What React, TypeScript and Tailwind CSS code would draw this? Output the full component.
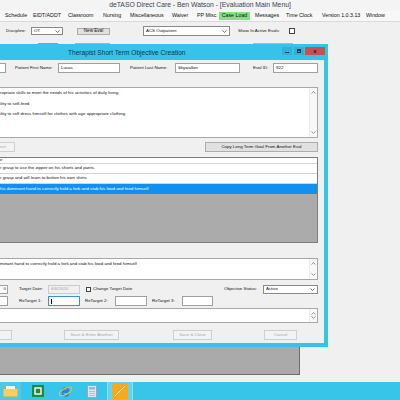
import React from 'react'

function Chevron({ up = false }: { up?: boolean }) {
  return (
    <svg width="5" height="3" viewBox="0 0 5 3" className="block">
      <path
        d={up ? 'M0.5 2.5 L2.5 0.6 L4.5 2.5' : 'M0.5 0.5 L2.5 2.4 L4.5 0.5'}
        fill="none"
        stroke="#6a6a6a"
        strokeWidth="0.7"
      />
    </svg>
  )
}

function ScrollBar() {
  return (
    <div className="flex h-full w-[8px] shrink-0 flex-col items-center justify-between border-l border-[#ececec] bg-[#f8f8f8] py-[3px]">
      <Chevron up />
      <Chevron />
    </div>
  )
}

function Select({ value, className }: { value: string; className: string }) {
  return (
    <div
      className={`flex items-center justify-between border border-[#8a8a8a] bg-white pl-[2px] pr-[2px] text-[4.4px] ${className}`}
    >
      <span>{value}</span>
      <svg width="5" height="3" viewBox="0 0 5 3" className="block">
        <path d="M0.5 0.5 L2.5 2.4 L4.5 0.5" fill="none" stroke="#333" strokeWidth="0.7" />
      </svg>
    </div>
  )
}

function TaskbarIcons() {
  return (
    <div className="flex h-full items-center">
      <div className="flex h-full w-[21px] items-center justify-center bg-[#48cbec]">
        <svg width="15" height="12" viewBox="0 0 15 12">
          <path d="M0.5 1.5 h5 l1.5 1.5 h7.5 v8.5 h-14z" fill="#dba533" />
          <rect x="3" y="1" width="9" height="4" fill="#eef6fb" />
          <rect x="0.5" y="4" width="14" height="7.5" fill="#f6cf63" />
        </svg>
      </div>
      <div className="ml-[11px]">
        <svg width="12" height="12" viewBox="0 0 12 12">
          <rect x="0" y="0" width="12" height="12" fill="#1d8b3d" />
          <rect x="3" y="3" width="6" height="6" fill="none" stroke="#fff" strokeWidth="1.4" />
        </svg>
      </div>
      <div className="ml-[14px]">
        <svg width="15" height="15" viewBox="0 0 15 15">
          <path
            d="M11 8 H4.5 A3 3 0 0 0 10.5 9.5 M4.5 6.6 A3 3 0 0 1 10.4 6.6 Z"
            fill="none"
            stroke="#2a86dc"
            strokeWidth="1.8"
          />
          <ellipse
            cx="7.5"
            cy="7.5"
            rx="7"
            ry="3"
            transform="rotate(-30 7.5 7.5)"
            fill="none"
            stroke="#f2c02e"
            strokeWidth="1.1"
          />
        </svg>
      </div>
      <div className="ml-[14px]">
        <svg width="10" height="13" viewBox="0 0 10 13">
          <rect x="0.5" y="0.5" width="9" height="12" fill="#dfe6ee" stroke="#97a9bd" />
          <rect x="2" y="2" width="6" height="2.5" fill="#8fb6dc" />
          <path d="M2 6.5 h6 M2 8.5 h6 M2 10.5 h6" stroke="#a7b5c4" strokeWidth="0.8" />
        </svg>
      </div>
      <div className="ml-[10px] flex h-full w-[26px] items-center justify-center border-x border-[#8fe0f4] bg-[#62d4f1]">
        <svg width="16" height="16" viewBox="0 0 16 16">
          <rect x="0" y="0" width="16" height="16" fill="#f6a820" />
          <path d="M3 13 L13 3" stroke="#fde7b8" strokeWidth="1" />
        </svg>
      </div>
    </div>
  )
}

export default function App() {
  return (
    <div className="relative flex h-[400px] w-[400px] flex-col overflow-hidden bg-[#f0f0f0] font-['Liberation_Sans',Arial,sans-serif] text-[#111]">
      {/* window title */}
      <div className="flex h-[11px] shrink-0 items-center justify-center bg-[#f4f4f4] text-[6.8px] text-[#354457]">
        deTASO Direct Care - Ben Watson - [Evaluation Main Menu]
      </div>

      {/* menu */}
      <div className="flex h-[11px] shrink-0 items-center border-b border-[#dadada] bg-[#f7f7f7] text-[5.3px]">
        <span className="ml-[5px] w-[28px]">Schedule</span>
        <span className="w-[35px]">EIDT/ADDT</span>
        <span className="w-[35px]">Classroom</span>
        <span className="w-[27px]">Nursing</span>
        <span className="w-[42px]">Miscellaneous</span>
        <span className="w-[25px]">Waiver</span>
        <span className="w-[22px]">PP Misc</span>
        <span className="flex h-[8px] w-[31px] items-center justify-center bg-[#84e284]">Case Load</span>
        <span className="ml-[5px] w-[31px]">Messages</span>
        <span className="w-[36px]">Time Clock</span>
        <span className="w-[44px]">Version 1.0.3.13</span>
        <span>Window</span>
      </div>

      {/* toolbar */}
      <div className="flex h-[18px] shrink-0 items-center pl-[6px] text-[4.4px]">
        <span className="w-[25px]">Discipline:</span>
        <Select value="OT" className="h-[8px] w-[32px]" />
        <div className="ml-[14px] flex h-[7px] w-[33px] items-center justify-center border border-[#adadad] bg-[#e1e1e1] text-[4.6px]">
          New Eval
        </div>
        <Select value="ACS Outpatient" className="ml-[33px] h-[10px] w-[87px]" />
        <span className="ml-[8px] w-[51px]">Show In Active Evals:</span>
        <div className="h-[6px] w-[6px] border border-[#444] bg-white" />
      </div>

      {/* edges of windows behind */}
      <div className="flex h-[4px] shrink-0 items-end">
        <div className="ml-[38px] h-[1px] w-[20px] bg-[#9a9a9a]" />
        <div className="ml-[17px] h-[1px] w-[35px] bg-[#b0b0b0]" />
        <div className="ml-[143px] h-[1px] w-[40px] bg-[#b8b8b8]" />
      </div>

      {/* main window content behind the dialog */}
      <div className="flex flex-1 flex-col justify-end pb-[7px]">
        <div className="h-[29px] w-[300px] border-r border-b border-[#6d6d6d] bg-[#aaaaaa]" />
      </div>

      {/* taskbar */}
      <div className="h-[18px] shrink-0 bg-[#37c5ea]">
        <TaskbarIcons />
      </div>

      {/* dialog window */}
      <div className="absolute left-0 top-[44px] flex h-[303px] w-[328px] flex-col bg-[#35c3ea]">
        <div className="flex h-[16px] shrink-0 items-start">
          <span className="ml-[68px] mt-[5px] text-[6.6px] leading-[8px] text-[#17324d]">
            Therapist Short Term Objective Creation
          </span>
          <div className="ml-auto mr-[3px] mt-[3px] flex">
            <div className="flex h-[8px] w-[10px] items-end justify-center bg-[#2fb2d8] pb-[2px]">
              <div className="h-[1px] w-[4px] bg-[#10304a]" />
            </div>
            <div className="ml-[2px] flex h-[8px] w-[10px] items-center justify-center bg-[#2fb2d8]">
              <div className="h-[4px] w-[4px] border border-t-2 border-[#10304a]" />
            </div>
            <div className="ml-[1px] flex h-[8px] w-[20px] items-center justify-center bg-[#c9504e] text-[6px] font-bold leading-none text-[#3a1010]">
              x
            </div>
          </div>
        </div>

        <div className="mb-[4px] mr-[4px] flex flex-1 flex-col bg-[#f0f0f0] pr-[6px] text-[4.4px]">
          {/* patient row */}
          <div className="mt-[3px] flex h-[10px] items-center">
            <div className="h-full w-[6px] border-y border-r border-[#a0a0a0] bg-white" />
            <span className="ml-[9px] w-[43px]">Patient First Name:</span>
            <div className="flex h-full w-[62px] items-center border border-[#a0a0a0] bg-white pl-[2px]">Lucas</div>
            <span className="ml-[10px] w-[45px]">Patient Last Name:</span>
            <div className="flex h-full w-[65px] items-center border border-[#a0a0a0] bg-white pl-[2px]">Skywalker</div>
            <span className="ml-[13px] w-[20px]">Eval ID:</span>
            <div className="flex h-full w-[45px] items-center border border-[#a0a0a0] bg-white pl-[2px]">922</div>
          </div>

          {/* long term goals */}
          <div className="mt-[14px] flex h-[51px] border-y border-r border-[#a8a8a8] bg-white">
            <div className="flex-1 leading-[10.5px]">
              <div>ropriate skills to meet the needs of his activities of daily living.</div>
              <div>ility to self-feed</div>
              <div>ility to self dress himself for clothes with age appropriate clothing</div>
            </div>
            <ScrollBar />
          </div>

          <div className="mt-[4px] flex h-[10px]">
            <div className="flex h-full w-[15px] items-center border-y border-r border-[#cfcfcf] bg-[#f3f3f3] text-[#a8a8a8]">
              ect
            </div>
            <div className="ml-auto flex h-full w-[113px] items-center justify-center border border-[#adadad] bg-[#e1e1e1]">
              Copy Long Term Goal From Another Eval
            </div>
          </div>

          {/* short term objectives grid */}
          <div className="mt-[5px] flex h-[86px] flex-col border-y border-r border-[#7c7c7c] bg-[#ababab]">
            <div className="flex h-[6px] items-center border-b border-[#d4d4d4] bg-white">e</div>
            <div className="flex h-[10px] items-center border-b border-[#d4d4d4] bg-white">
              r grasp to use the zipper on his shorts and pants.
            </div>
            <div className="flex h-[10px] items-center border-b border-[#d4d4d4] bg-white">
              r grasp and will learn to button his own shirts
            </div>
            <div className="flex h-[10px] items-center bg-[#1190f0] text-white">
              his dominant hand to correctly hold a fork and stab his food and feed himself
            </div>
          </div>

          {/* objective text */}
          <div className="mt-[15px] flex h-[22px] border-y border-r border-[#a8a8a8] bg-white">
            <div className="flex-1 pt-[1px] leading-[7px]">
              minant hand to correctly hold a fork and stab his food and feed himself
            </div>
            <ScrollBar />
          </div>

          {/* target date row */}
          <div className="mt-[5px] flex h-[9px] items-center">
            <div className="flex h-full w-[8px] items-center justify-end border-y border-r border-[#a0a0a0] bg-white pr-[1px]">
              0
            </div>
            <span className="ml-[11px] w-[29px]">Target Date:</span>
            <div className="flex h-full w-[32px] items-center border border-[#cccccc] bg-[#f0f0f0] pl-[2px] text-[#a2a2a2]">
              6/6/2020
            </div>
            <div className="ml-[6px] h-[5px] w-[5px] border border-[#444] bg-white" />
            <span className="ml-[2px]">Change Target Date</span>
            <span className="ml-auto w-[39px]">Objective Status:</span>
            <Select value="Active" className="h-full w-[55px]" />
          </div>

          {/* retarget row */}
          <div className="mt-[2px] flex h-[10px] items-center">
            <div className="h-full w-[8px] border-y border-r border-[#a0a0a0] bg-white" />
            <span className="ml-[11px] w-[29px]">ReTarget 1:</span>
            <div className="flex h-full w-[32px] items-center border border-[#3d8de0] bg-white pl-[2px]">
              <div className="h-[5px] w-[0.5px] bg-black" />
            </div>
            <span className="ml-[5px] w-[30px]">ReTarget 2:</span>
            <div className="h-full w-[32px] border border-[#a0a0a0] bg-white" />
            <span className="ml-[5px] w-[30px]">ReTarget 3:</span>
            <div className="h-full w-[31px] border border-[#a0a0a0] bg-white" />
          </div>

          {/* notes */}
          <div className="mt-[2px] flex h-[15px] border-y border-r border-[#a8a8a8] bg-white">
            <div className="flex-1" />
            <ScrollBar />
          </div>

          {/* action buttons */}
          <div className="mt-[7px] flex h-[10px] text-[#a8a8a8]">
            <div className="h-full w-[12px] border-y border-r border-[#cfcfcf] bg-[#f3f3f3]" />
            <div className="ml-[52px] flex h-full w-[55px] items-center justify-center border border-[#cfcfcf] bg-[#f3f3f3]">
              Save &amp; Enter Another
            </div>
            <div className="ml-[54px] flex h-full w-[39px] items-center justify-center border border-[#cfcfcf] bg-[#f3f3f3]">
              Save &amp; Close
            </div>
            <div className="ml-[52px] flex h-full w-[33px] items-center justify-center border border-[#cfcfcf] bg-[#f3f3f3]">
              Cancel
            </div>
          </div>
        </div>
      </div>
    </div>
  )
}
